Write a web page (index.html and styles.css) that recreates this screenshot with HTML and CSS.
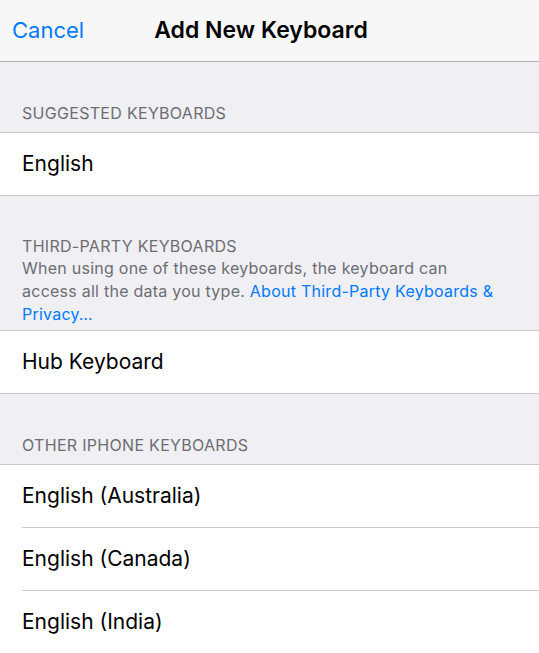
FILE: index.html
```html
<!DOCTYPE html>
<html lang="en">
<head>
<meta charset="utf-8">
<title>Add New Keyboard</title>
<link rel="stylesheet" href="styles.css">
</head>
<body>
<div class="screen">
  <header class="navbar">
    <a class="nav-cancel">Cancel</a>
    <h1 class="nav-title">Add New Keyboard</h1>
  </header>

  <section class="group">
    <div class="group-header">
      <div class="group-title">SUGGESTED KEYBOARDS</div>
    </div>
    <ul class="list">
      <li class="row">English</li>
    </ul>
  </section>

  <section class="group">
    <div class="group-header group-header-desc">
      <div class="group-title">THIRD-PARTY KEYBOARDS</div>
      <p class="group-desc">When using one of these keyboards, the keyboard can access all the data you type. <a class="link">About Third-Party Keyboards &amp; Privacy…</a></p>
    </div>
    <ul class="list">
      <li class="row">Hub Keyboard</li>
    </ul>
  </section>

  <section class="group">
    <div class="group-header">
      <div class="group-title">OTHER IPHONE KEYBOARDS</div>
    </div>
    <ul class="list">
      <li class="row">English (Australia)</li>
      <li class="row">English (Canada)</li>
      <li class="row">English (India)</li>
    </ul>
  </section>
</div>
</body>
</html>
```

FILE: styles.css
```css
* { box-sizing: border-box; }
html, body {
  margin: 0;
  padding: 0;
  background: #efeff4;
  font-family: Inter, "Liberation Sans", Arial, sans-serif;
  -webkit-font-smoothing: antialiased;
}
.screen {
  width: 539px;
  height: 653px;
  overflow: hidden;
  background: #efeff4;
}
.navbar {
  height: 62px;
  background: #f7f7f7;
  border-bottom: 1px solid #b2b2b2;
  display: flex;
  align-items: center;
  justify-content: center;
  position: relative;
}
.nav-cancel {
  position: absolute;
  left: 12px;
  top: 0;
  line-height: 61px;
  font-size: 22px;
  color: #007aff;
}
.nav-title {
  margin: 0 17px 0 0;
  font-size: 23px;
  font-weight: 600;
  color: #000;
  line-height: 61px;
}
.group-header {
  padding: 40px 22px 8px;
}
.group-header-desc {
  padding: 39px 40px 4px 22px;
}
.group-title {
  font-size: 16px;
  line-height: 22px;
  color: #6d6d72;
  letter-spacing: 0.3px;
}
.group-desc {
  margin: 0;
  font-size: 16px;
  line-height: 23px;
  color: #6d6d72;
  letter-spacing: 0.25px;
}
.link { color: #007aff; }
.list {
  list-style: none;
  margin: 0;
  padding: 0;
  background: #fff;
  border-top: 1px solid #c8c7cc;
  border-bottom: 1px solid #c8c7cc;
}
.row {
  height: 62px;
  line-height: 62px;
  padding-left: 22px;
  font-size: 21px;
  color: #000;
}
.row + .row {
  border-top: 1px solid #c8c7cc;
  height: 63px;
  margin-left: 22px;
  padding-left: 0;
}
```
